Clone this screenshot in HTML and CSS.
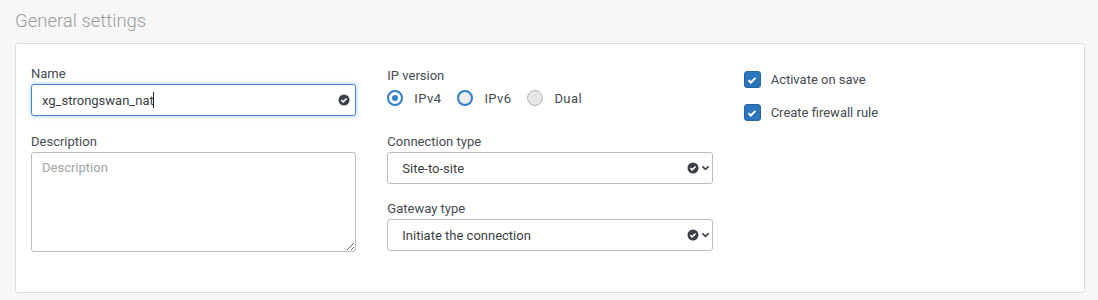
FILE: index.html
```html
<!DOCTYPE html>
<html lang="en">
<head>
  <meta charset="UTF-8">
  <title>General settings</title>
  <link rel="stylesheet" href="styles.css">
</head>
<body>
  <h2 class="section-title">General settings</h2>

  <div class="card">
    <div class="col">
      <div class="field">
        <label class="label" for="name">Name</label>
        <div class="control">
          <input id="name" class="input focused" type="text" value="xg_strongswan_nat">
          <span class="caret"></span>
          <svg class="ok-icon" viewBox="0 0 12 12"><circle cx="6" cy="6" r="5.5" fill="#3b4148"/><path d="M3.4 6.1l1.8 1.8 3.4-3.4" fill="none" stroke="#fff" stroke-width="1.6"/></svg>
        </div>
      </div>
      <div class="field">
        <label class="label" for="desc">Description</label>
        <textarea id="desc" class="textarea" placeholder="Description"></textarea>
      </div>
    </div>

    <div class="col col-mid">
      <div class="field">
        <span class="label">IP version</span>
        <div class="radios">
          <span class="radio checked"></span><span class="radio-text">IPv4</span>
          <span class="radio"></span><span class="radio-text">IPv6</span>
          <span class="radio disabled"></span><span class="radio-text">Dual</span>
        </div>
      </div>
      <div class="field">
        <label class="label" for="conn">Connection type</label>
        <div class="control">
          <select id="conn" class="select"><option>Site-to-site</option></select>
          <span class="select-icons">
            <svg class="ok-icon-sm" viewBox="0 0 12 12"><circle cx="6" cy="6" r="5.5" fill="#3b4148"/><path d="M3.4 6.1l1.8 1.8 3.4-3.4" fill="none" stroke="#fff" stroke-width="1.6"/></svg>
            <svg class="chevron" viewBox="0 0 10 6"><path d="M1.5 1.2l3.5 3.4 3.5-3.4" fill="none" stroke="#3b4148" stroke-width="1.8"/></svg>
          </span>
        </div>
      </div>
      <div class="field">
        <label class="label" for="gw">Gateway type</label>
        <div class="control">
          <select id="gw" class="select"><option>Initiate the connection</option></select>
          <span class="select-icons">
            <svg class="ok-icon-sm" viewBox="0 0 12 12"><circle cx="6" cy="6" r="5.5" fill="#3b4148"/><path d="M3.4 6.1l1.8 1.8 3.4-3.4" fill="none" stroke="#fff" stroke-width="1.6"/></svg>
            <svg class="chevron" viewBox="0 0 10 6"><path d="M1.5 1.2l3.5 3.4 3.5-3.4" fill="none" stroke="#3b4148" stroke-width="1.8"/></svg>
          </span>
        </div>
      </div>
    </div>

    <div class="col col-right">
      <div class="check-row">
        <span class="checkbox"><svg viewBox="0 0 12 12"><path d="M2.6 6.2l2.3 2.3 4.6-4.6" fill="none" stroke="#fff" stroke-width="2"/></svg></span>
        <span class="check-text">Activate on save</span>
      </div>
      <div class="check-row">
        <span class="checkbox"><svg viewBox="0 0 12 12"><path d="M2.6 6.2l2.3 2.3 4.6-4.6" fill="none" stroke="#fff" stroke-width="2"/></svg></span>
        <span class="check-text">Create firewall rule</span>
      </div>
    </div>
  </div>
</body>
</html>
```

FILE: styles.css
```css
body {
  margin: 0;
  background-color: #f7f7f7;
  font-family: Roboto, "Noto Sans", sans-serif;
  font-size: 13px;
  color: #454b51;
}

.section-title {
  margin: 0;
  padding: 9px 15px 0;
  height: 43px;
  box-sizing: border-box;
  font-size: 18.5px;
  font-weight: 300;
  line-height: 24px;
  color: #9a9da0;
}

.card {
  height: 250px;
  margin: 0 13px 0 15px;
  box-sizing: border-box;
  background-color: #fff;
  border: 1px solid #dcdcdc;
  border-radius: 3px;
  padding: 22px 15px 0;
  display: flex;
  gap: 31px;
}

.col {
  width: 326px;
  display: flex;
  flex-direction: column;
}

.col-mid {
  padding-top: 2px;
}

.field {
  display: flex;
  flex-direction: column;
}

.field + .field {
  margin-top: 18px;
}

.col-mid .field + .field {
  margin-top: 26px;
}

.col-mid .field:last-child {
  margin-top: 17px;
}

.label {
  line-height: 16px;
  margin-bottom: 2px;
}

.control {
  position: relative;
}

.input,
.select,
.textarea {
  display: block;
  width: 100%;
  box-sizing: border-box;
  font-family: inherit;
  font-size: 13px;
  color: #3a3f44;
  background-color: #fff;
  border: 1px solid #b9bcc0;
  border-radius: 3px;
  margin: 0;
  outline: none;
}

.input {
  height: 32px;
  padding: 0 30px 0 10px;
}

.input.focused {
  border-color: #3c87d2;
  box-shadow: 0 0 5px rgba(60, 135, 210, 0.45);
}

.caret {
  position: absolute;
  left: 122px;
  top: 8px;
  width: 1px;
  height: 16px;
  background-color: #222;
}

.ok-icon {
  position: absolute;
  right: 6px;
  top: 10px;
  width: 12px;
  height: 12px;
}

.textarea {
  height: 100px;
  padding: 7px 10px;
  resize: vertical;
}

.textarea::placeholder {
  color: #a0a3a6;
}

.select {
  height: 32px;
  padding: 0 40px 0 14px;
  appearance: none;
  -webkit-appearance: none;
}

.select-icons {
  position: absolute;
  right: 3px;
  top: 0;
  height: 32px;
  display: flex;
  align-items: center;
  gap: 2px;
  pointer-events: none;
}

.ok-icon-sm {
  width: 12px;
  height: 12px;
}

.chevron {
  width: 9px;
  height: 6px;
}

.radios {
  display: flex;
  align-items: center;
  height: 20px;
  margin-top: 2px;
}

.radio {
  width: 16px;
  height: 16px;
  box-sizing: border-box;
  border: 2px solid #2f7fcb;
  border-radius: 50%;
  background-color: #ececec;
  margin-right: 11px;
  position: relative;
}

.radio.checked {
  background-color: #fff;
}

.radio.checked::after {
  content: "";
  position: absolute;
  left: 3px;
  top: 3px;
  width: 6px;
  height: 6px;
  border-radius: 50%;
  background-color: #2f7fcb;
}

.radio.disabled {
  border: 1px solid #b3b3b3;
  background-color: #e6e6e6;
}

.radio-text {
  margin-right: 16px;
  letter-spacing: 0.4px;
}

.col-right {
  padding-top: 5px;
  gap: 16px;
}

.check-row {
  display: flex;
  align-items: center;
  height: 17px;
}

.checkbox {
  width: 17px;
  height: 17px;
  box-sizing: border-box;
  background-color: #2c76bd;
  border: 1px solid #24649f;
  border-radius: 3px;
  display: flex;
  align-items: center;
  justify-content: center;
  margin-right: 10px;
}

.checkbox svg {
  width: 12px;
  height: 12px;
}
```
